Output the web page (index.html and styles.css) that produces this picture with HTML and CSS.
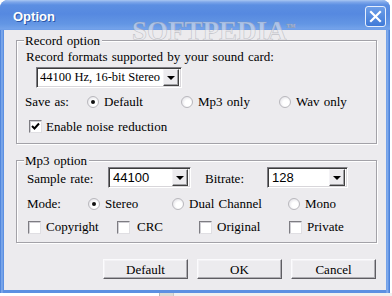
FILE: index.html
```html
<!DOCTYPE html>
<html>
<head>
<meta charset="utf-8">
<link rel="stylesheet" href="styles.css">
</head>
<body>
<div class="window">
  <div class="titlebar">
    <span class="title">Option</span>
    <span class="close">
      <svg width="21" height="21" viewBox="0 0 21 21"><path d="M6 6 L15 15 M15 6 L6 15" stroke="#fff" stroke-width="2.2" stroke-linecap="square"/></svg>
    </span>
    <span class="watermark">SOFTPEDIA<sup>™</sup></span>
  </div>
  <div class="client">
    <div class="group g1">
      <span class="gtitle">Record option</span>
      <div class="row r-formats">Record formats supported by your sound card:</div>
      <div class="combo c-format"><span class="ctext">44100 Hz, 16-bit Stereo</span><span class="dd"><i></i></span></div>
      <div class="row r-save">
        <span class="lbl w-save">Save as:</span>
        <span class="opt w-def"><i class="radio on"></i>Default</span>
        <span class="opt w-mp3"><i class="radio"></i>Mp3 only</span>
        <span class="opt"><i class="radio"></i>Wav only</span>
      </div>
      <div class="row r-noise">
        <span class="opt"><i class="check on"><svg width="9" height="9" viewBox="0 0 9 9"><path d="M1 4 L3.5 6.5 L8 1.5" stroke="#000" stroke-width="2" fill="none"/></svg></i>Enable noise reduction</span>
      </div>
    </div>
    <div class="group g2">
      <span class="gtitle">Mp3 option</span>
      <div class="row r-rate">
        <span class="lbl w-rate">Sample rate:</span>
        <div class="combo c-rate"><span class="ctext sans">44100</span><span class="dd"><i></i></span></div>
        <span class="lbl w-bit">Bitrate:</span>
        <div class="combo c-bit"><span class="ctext sans">128</span><span class="dd"><i></i></span></div>
      </div>
      <div class="row r-mode">
        <span class="lbl w-mode">Mode:</span>
        <span class="opt w-stereo"><i class="radio on"></i>Stereo</span>
        <span class="opt w-dual"><i class="radio"></i>Dual Channel</span>
        <span class="opt"><i class="radio"></i>Mono</span>
      </div>
      <div class="row r-flags">
        <span class="opt w-copy"><i class="check"></i>Copyright</span>
        <span class="opt w-crc"><i class="check"></i>CRC</span>
        <span class="opt w-orig"><i class="check"></i>Original</span>
        <span class="opt"><i class="check"></i>Private</span>
      </div>
    </div>
    <div class="buttons">
      <span class="btn">Default</span>
      <span class="btn">OK</span>
      <span class="btn">Cancel</span>
    </div>
  </div>
</div>
<div class="below"><span class="b-white"></span><span class="b-grey"></span><span class="b-light"></span></div>
</body>
</html>
```
FILE: styles.css
```css
html, body { margin: 0; padding: 0; background: #fff; }
body { width: 392px; height: 296px; overflow: hidden; font: 13px/15px "Liberation Serif", "Times New Roman", serif; word-spacing: 1px; color: #000; }

.window {
  width: 390px;
  height: 293px;
  display: flex;
  flex-direction: column;
  border-radius: 8px 8px 0 0;
  background: linear-gradient(to right, #3f78d6 0, #8cb4f0 2px, #5c90e2 3px, #5c90e2 386px, #8cb4f0 387px, #3f78d6 390px);
  box-sizing: border-box;
  overflow: hidden;
}

.titlebar {
  position: relative;
  height: 30px;
  flex: none;
  display: flex;
  align-items: center;
  padding: 0 4px 0 13px;
  background: linear-gradient(to bottom, #a9c7f2 0, #7ea7ea 2px, #5b8ee2 5px, #5689e0 14px, #6396e4 24px, #74a3ea 29px, #6a9ae6 30px);
}
.title {
  font: bold 13px/15px "Liberation Sans", Arial, sans-serif;
  color: #fff;
  text-shadow: 1px 1px 0 #2a56a8;
  margin-top: 3px;
  word-spacing: 0;
}
.close {
  margin-left: auto;
  width: 21px;
  height: 21px;
  box-sizing: border-box;
  border: 1px solid #e6eefc;
  border-radius: 3px;
  background: linear-gradient(to bottom, #6d9ee8, #3f7ad8);
  display: flex;
  align-items: center;
  justify-content: center;
  margin-top: 2px;
}
.close svg { display: block; margin: -1px; }
.watermark {
  position: absolute;
  left: 132px;
  top: 17px;
  font: bold 27px/28px "Liberation Serif", serif;
  color: rgba(235, 235, 240, 0.55);
  -webkit-text-stroke: 0.6px rgba(150, 150, 160, 0.5);
  pointer-events: none;
  word-spacing: 0;
}
.watermark sup { font-size: 9px; vertical-align: top; position: relative; top: -4px; }

.client {
  flex: 1;
  margin: 0 4px 3px 4px;
  background: #ecebee;
  padding: 10px 0 0 12px;
  display: flex;
  flex-direction: column;
  align-items: flex-start;
}

.group {
  position: relative;
  width: 361px;
  box-sizing: border-box;
  border: 1px solid #a3a2a8;
  box-shadow: 1px 1px 0 #fff, inset 1px 1px 0 #fff;
  display: flex;
  flex-direction: column;
  align-items: flex-start;
}
.g1 { height: 104px; }
.g2 { height: 83px; margin-top: 16px; }
.gtitle {
  position: absolute;
  top: -8px;
  left: 7px;
  padding: 0 2px 0 1px;
  background: #ecebee;
  line-height: 15px;
  white-space: nowrap;
}

.row { display: flex; align-items: center; height: 15px; white-space: nowrap; }
.lbl, .opt { display: flex; align-items: center; flex: none; white-space: nowrap; }

.r-formats { margin-top: 8px; padding-left: 9px; }
.c-format { margin: 3px 0 0 19px; width: 146px; }
.c-format .ctext { font-size: 12.5px; word-spacing: 0; }
.r-save { margin-top: 6px; padding-left: 8px; }
.w-save { width: 62px; }
.w-def { width: 94px; }
.w-mp3 { width: 98px; }
.r-noise { margin-top: 10px; padding-left: 12px; }

.r-rate { margin-top: 6px; padding-left: 10px; height: 21px; }
.w-rate { width: 81px; padding-top: 1px; }
.c-rate { width: 83px; }
.w-bit { width: 62px; margin-left: 14px; padding-top: 2px; }
.c-bit { width: 81px; }
.r-mode { margin-top: 8px; padding-left: 10px; }
.w-mode { width: 61px; }
.w-stereo { width: 84px; }
.w-dual { width: 116px; }
.r-flags { margin-top: 8px; padding-left: 11px; }
.w-copy { width: 89px; }
.w-crc { width: 82px; }
.w-orig { width: 90px; }

.combo {
  height: 21px;
  box-sizing: border-box;
  display: flex;
  align-items: center;
  background: #fff;
  border: 1px solid;
  border-color: #7d7c82 #fff #fff #7d7c82;
  box-shadow: inset 1px 1px 0 #3c3c3c, inset -1px -1px 0 #d8d6da;
  padding: 2px 2px 2px 3px;
  flex: none;
}
.ctext { flex: 1; white-space: nowrap; overflow: hidden; line-height: 15px; }
.ctext.sans { font: 13px/15px "Liberation Sans", Arial, sans-serif; padding-left: 1px; }
.dd {
  width: 16px;
  height: 17px;
  box-sizing: border-box;
  flex: none;
  background: #ecebee;
  border: 1px solid;
  border-color: #f4f3f6 #404040 #404040 #f4f3f6;
  box-shadow: inset -1px -1px 0 #a0a0a4;
  display: flex;
  align-items: center;
  justify-content: center;
}
.dd i {
  width: 0; height: 0;
  border-left: 4px solid transparent;
  border-right: 4px solid transparent;
  border-top: 4px solid #000;
  margin-top: 1px;
  margin-right: 1px;
}

.radio {
  width: 12px;
  height: 12px;
  box-sizing: border-box;
  border-radius: 50%;
  border: 1px solid #b9b8bd;
  background: radial-gradient(circle at 60% 60%, #fff 0, #fff 35%, #e4e3e8 80%, #cfced4 100%);
  margin-right: 5px;
  display: flex;
  align-items: center;
  justify-content: center;
  flex: none;
}
.radio.on::after {
  content: "";
  width: 4px;
  height: 4px;
  border-radius: 50%;
  background: #111;
}
.check {
  width: 13px;
  height: 13px;
  box-sizing: border-box;
  background: #fff;
  border: 1px solid;
  border-color: #7d7c82 #e0dfe3 #e0dfe3 #7d7c82;
  box-shadow: inset 1px 1px 0 #d0cfd4;
  margin-right: 4px;
  display: flex;
  align-items: center;
  justify-content: center;
  flex: none;
}
.check svg { display: block; }
.r-flags .check { margin-top: 2px; margin-right: 5px; }
.w-crc .check { margin-right: 7px; }

.buttons {
  display: flex;
  gap: 9px;
  margin-top: 16px;
  margin-left: 87px;
}
.btn {
  width: 85px;
  height: 20px;
  box-sizing: border-box;
  display: flex;
  align-items: center;
  justify-content: center;
  background: #ecebee;
  border: 1px solid;
  border-color: #fbfbfd #5e5d62 #5e5d62 #fbfbfd;
  box-shadow: inset -1px -1px 0 #aeadb2, inset 1px 1px 0 #f3f2f5;
}

.below { display: flex; height: 3px; }
.b-white { width: 159px; background: #fff; }
.b-grey { width: 14px; background: #dcdbd6; border-left: 1px solid #b8b8b8; box-sizing: border-box; }
.b-light { flex: 1; background: #f1f0ef; border-left: 1px solid #c8c8c8; }
```
